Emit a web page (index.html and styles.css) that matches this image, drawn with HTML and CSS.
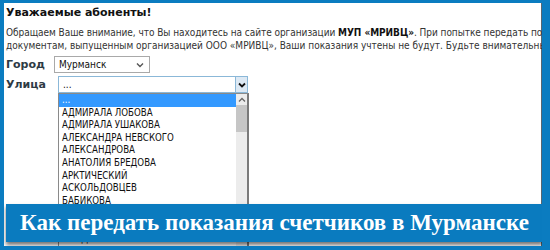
FILE: index.html
```html
<!DOCTYPE html>
<html lang="ru">
<head>
    <meta charset="UTF-8">
    <title>Передача показаний</title>
    <link rel="stylesheet" href="styles.css">
</head>
<body>
    <div class="frame">
        <div class="content">
            <h2>Уважаемые абоненты!</h2>
            <p class="notice">
                <span class="line">Обращаем Ваше внимание, что Вы находитесь на сайте организации <b>МУП «МРИВЦ»</b>. При попытке передать показания по</span>
                <span class="line">документам, выпущенным организацией ООО «МРИВЦ», Ваши показания учтены не будут. Будьте внимательны при передаче показаний.</span>
            </p>
            <div class="row row-city">
                <span class="label">Город</span>
                <div class="select select-city">
                    <span>Мурманск</span>
                    <svg class="chev" width="8" height="6" viewBox="0 0 8 6"><path d="M1 1.5 L4 4.5 L7 1.5" fill="none" stroke="#555" stroke-width="1.4"/></svg>
                </div>
            </div>
            <div class="row row-street">
                <span class="label">Улица</span>
                <div class="select select-street">
                    <span>...</span>
                    <span class="drop-btn"><svg width="8" height="6" viewBox="0 0 8 6"><path d="M1 1.5 L4 4.5 L7 1.5" fill="none" stroke="#111" stroke-width="1.8"/></svg></span>
                    <div class="list">
                        <div class="items">
                            <div class="item active">...</div>
                            <div class="item">АДМИРАЛА ЛОБОВА</div>
                            <div class="item">АДМИРАЛА УШАКОВА</div>
                            <div class="item">АЛЕКСАНДРА НЕВСКОГО</div>
                            <div class="item">АЛЕКСАНДРОВА</div>
                            <div class="item">АНАТОЛИЯ БРЕДОВА</div>
                            <div class="item">АРКТИЧЕСКИЙ</div>
                            <div class="item">АСКОЛЬДОВЦЕВ</div>
                            <div class="item">БАБИКОВА</div>
                            <div class="item">БЕРИНГА</div>
                            <div class="item">БЕРЕГОВАЯ</div>
                            <div class="item">БОНДАРНАЯ</div>
                        </div>
                        <div class="scrollbar">
                            <svg class="up" width="8" height="6" viewBox="0 0 8 6"><path d="M1 4.5 L4 1.5 L7 4.5" fill="none" stroke="#666" stroke-width="1.3"/></svg>
                            <div class="thumb"></div>
                        </div>
                    </div>
                </div>
            </div>
        </div>
        <div class="banner">Как передать показания счетчиков в Мурманске</div>
    </div>
</body>
</html>
```

FILE: styles.css
```css
body {
    margin: 0;
    width: 550px;
    height: 250px;
    overflow: hidden;
    font-family: 'DejaVu Sans Condensed', 'Liberation Sans', Arial, sans-serif;
    color: #222;
}

.frame {
    position: relative;
    box-sizing: border-box;
    width: 550px;
    height: 250px;
    background: #fff;
    border-style: solid;
    border-color: #0b7cc0;
    border-width: 3px 8px 4px 4px;
    box-shadow: inset -1px 0 0 #5a6670;
    overflow: hidden;
}

.content {
    padding: 3px 0 0 2px;
}

h2 {
    margin: 0;
    font-family: 'DejaVu Sans', Verdana, sans-serif;
    font-size: 11px;
    line-height: 14px;
    font-weight: bold;
    color: #111;
}

.notice {
    margin: 6px 0 0;
    font-size: 10px;
    line-height: 13px;
    color: #333;
}

.notice .line {
    display: block;
    white-space: nowrap;
}

.notice .line:first-child {
    letter-spacing: -0.05px;
}

.notice b {
    color: #111;
}

.row {
    display: flex;
    align-items: center;
}

.row-city {
    margin-top: 4px;
}

.row-street {
    margin-top: 3px;
}

.label {
    font-family: 'DejaVu Sans', Verdana, sans-serif;
    font-size: 11px;
    font-weight: bold;
    color: #2e3a44;
}

.row-city .label {
    width: 48px;
}

.row-street .label {
    width: 52px;
}

.select {
    position: relative;
    box-sizing: border-box;
    display: flex;
    align-items: center;
    justify-content: space-between;
    font-size: 10px;
    border: 1px solid #a9a9a9;
    background: #fff;
    color: #111;
}

.select-city {
    width: 96px;
    height: 17px;
    padding: 0 5px 0 4px;
}

.select-street {
    width: 190px;
    height: 17px;
    padding-left: 4px;
    border-color: #8bb8d8;
}

.drop-btn {
    box-sizing: border-box;
    width: 12px;
    height: 15px;
    display: flex;
    align-items: center;
    justify-content: center;
    background: #dde9f4;
    border-left: 1px solid #8bb8d8;
}

.list {
    position: absolute;
    left: -1px;
    top: 16px;
    width: 191px;
    height: 170px;
    display: flex;
    background: #fff;
    border: 1px solid #8a8a8a;
    border-right: 2px solid #7a7a7a;
    box-sizing: border-box;
}

.items {
    flex: 1;
    font-size: 9.6px;
}

.item {
    height: 12.6px;
    line-height: 12.6px;
    padding-left: 3px;
    color: #111;
    white-space: nowrap;
}

.item.active {
    background: #3399ff;
    color: #fff;
}

.scrollbar {
    width: 11px;
    background: #ececec;
    display: flex;
    flex-direction: column;
    align-items: center;
}

.scrollbar .up {
    margin: 3px 0 2px;
}

.thumb {
    width: 11px;
    height: 27px;
    background: #c6c6c6;
}

.banner {
    position: absolute;
    left: 2px;
    top: 201px;
    width: 537px;
    height: 38px;
    background: #0a7bbf;
    box-shadow: 0 3px 4px rgba(0, 0, 0, 0.55);
    color: #fff;
    font-family: 'Liberation Serif', 'Times New Roman', serif;
    font-weight: bold;
    font-size: 23px;
    line-height: 38px;
    text-align: center;
    white-space: nowrap;
}
```
